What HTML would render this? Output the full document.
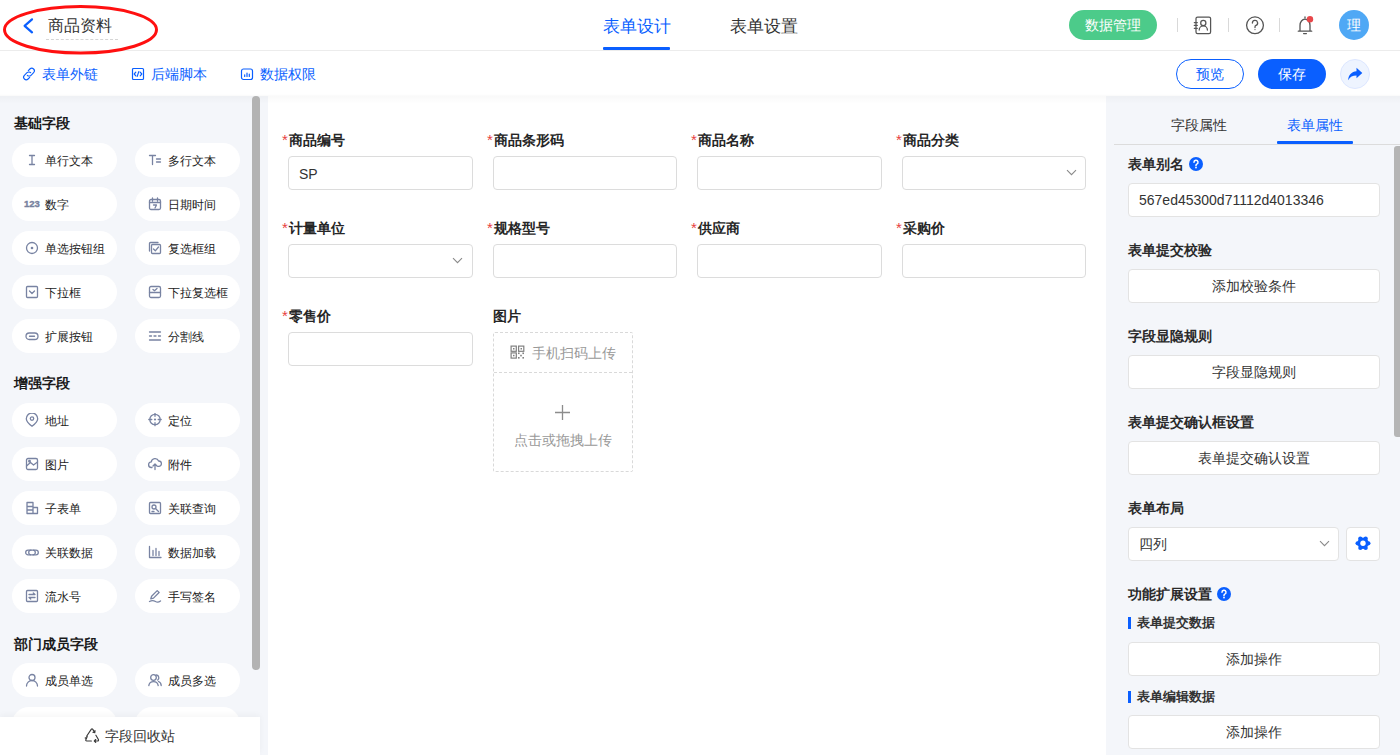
<!DOCTYPE html>
<html><head><meta charset="utf-8">
<style>
*{box-sizing:border-box;margin:0;padding:0}
html,body{width:1400px;height:755px;overflow:hidden;background:#fff;font-family:"Liberation Sans",sans-serif;color:#333}
.abs{position:absolute}
#hdr{position:absolute;left:0;top:0;width:1400px;height:51px;background:#fff;border-bottom:1px solid #ececec}
#bar{position:absolute;left:0;top:51px;width:1400px;height:45px;background:#fff}
#left{position:absolute;left:0;top:96px;width:268px;height:659px;background:#f4f6fa;overflow:hidden}
#canvas{position:absolute;left:268px;top:96px;width:838px;height:659px;background:#fff}
#right{position:absolute;left:1106px;top:96px;width:294px;height:659px;background:#f4f6fa;overflow:hidden}
#topshadow{position:absolute;left:0;top:94px;width:1400px;height:10px;background:linear-gradient(rgba(0,0,0,0),rgba(0,0,0,0.025) 20%,rgba(0,0,0,0));pointer-events:none}
.t{position:absolute;white-space:nowrap;line-height:1}
.blue{color:#0a5fff}
.sec{font-weight:bold;font-size:14px;color:#1a1a1a}
.pill{position:absolute;width:105px;height:34px;border-radius:17px;background:#fff;font-size:12px;color:#222}
.pill .ic{position:absolute;left:13px;top:10px;width:14px;height:14px}
.pill .tx{position:absolute;left:33px;top:11px;line-height:14px;white-space:nowrap}
.lbl{position:absolute;font-size:14px;font-weight:bold;color:#262626;line-height:1;white-space:nowrap}
.lbl i{font-style:normal;color:#e83e3e;font-weight:normal;font-size:15px;line-height:0;position:relative;top:0;margin-right:1px}
.inp{position:absolute;width:184px;height:34px;border:1px solid #dcdcdc;border-radius:4px;background:#fff}
.rbtn{position:absolute;left:1128px;width:252px;height:34px;border:1px solid #e3e3e3;border-radius:4px;background:#fff;font-size:14px;color:#333;text-align:center;line-height:32px}
.rl{position:absolute;left:1128px;font-size:14px;font-weight:bold;color:#2a2a2a;line-height:1;white-space:nowrap}
</style></head><body>
<div id="hdr"></div>
<div id="bar"></div>
<div id="left"></div>
<div id="canvas"></div>
<div id="right"></div>
<div id="topshadow"></div>

<!-- header -->
<svg class="abs" style="left:20px;top:15px" width="16" height="20" viewBox="0 0 16 20"><path d="M12 4.3 L4.6 10.8 L12 17.3" fill="none" stroke="#0a5fff" stroke-width="2.2" stroke-linecap="round" stroke-linejoin="round"/></svg>
<div class="t" style="left:48px;top:18px;font-size:16px;color:#333">商品资料</div>
<div class="abs" style="left:46px;top:39px;width:72px;border-top:1px dashed #d5d5d5"></div>
<svg class="abs" style="left:0;top:0" width="162" height="58"><ellipse cx="80.5" cy="29.8" rx="76" ry="23.2" fill="none" stroke="#ff1010" stroke-width="3"/></svg>

<div class="t blue" style="left:603px;top:18px;font-size:17px">表单设计</div>
<div class="abs" style="left:603px;top:47px;width:67px;height:3px;background:#0a5fff;border-radius:1px"></div>
<div class="t" style="left:730px;top:18px;font-size:17px;color:#333">表单设置</div>

<div class="abs" style="left:1069px;top:10px;width:88px;height:30px;border-radius:15px;background:#4ccb8a;color:#fff;font-size:14px;text-align:center;line-height:30px">数据管理</div>
<div class="abs" style="left:1177px;top:18px;width:1px;height:14px;background:#d9d9d9"></div>
<div class="abs" style="left:1228px;top:18px;width:1px;height:14px;background:#d9d9d9"></div>
<div class="abs" style="left:1279px;top:18px;width:1px;height:14px;background:#d9d9d9"></div>
<div class="abs" style="left:1339px;top:10px;width:30px;height:30px;border-radius:15px;background:#4fa8f5;color:#fff;font-size:14px;text-align:center;line-height:30px">理</div>


<svg class="abs" style="left:1192px;top:15px" width="22" height="21" viewBox="0 0 22 21" fill="none" stroke="#555" stroke-width="1.25" stroke-linecap="round"><rect x="4" y="2" width="14.6" height="16.6" rx="1.6"/><path d="M2.3 7.5h3M2.3 10.4h3M2.3 13.3h3"/><circle cx="11.3" cy="8" r="2.6"/><path d="M7.2 15a4.1 4.1 0 0 1 8.2 0"/></svg>
<svg class="abs" style="left:1244px;top:14px" width="22" height="22" viewBox="0 0 22 22" fill="none" stroke="#555" stroke-width="1.3" stroke-linecap="round"><circle cx="11" cy="11.3" r="8.4"/><path d="M8.4 9a2.6 2.6 0 1 1 3.6 2.4c-.7.3-1 .8-1 1.5v.7"/><circle cx="11" cy="15.6" r=".6" fill="#555" stroke="none"/></svg>
<svg class="abs" style="left:1295px;top:14px" width="22" height="22" viewBox="0 0 22 22" fill="none" stroke="#555" stroke-width="1.3" stroke-linecap="round" stroke-linejoin="round"><path d="M10 2.8v1.2M5 16.8V11.4a5 6.2 0 0 1 10 0V16.8M3.3 17.2h13.4M8.6 19.6h2.8"/><circle cx="15" cy="5.2" r="3.2" fill="#e8474a" stroke="none"/></svg>
<svg class="abs" style="left:21px;top:66px" width="16" height="16" viewBox="0 0 16 16" fill="none" stroke="#0a5fff" stroke-width="1.1" stroke-linecap="round"><path d="M7.3 4.6l1.6-1.6a2.6 2.6 0 0 1 3.7 3.7l-2.6 2.6a2.6 2.6 0 0 1-3.7 0"/><path d="M8.7 11.4l-1.6 1.6a2.6 2.6 0 0 1-3.7-3.7L6 6.7a2.6 2.6 0 0 1 3.7 0"/></svg>
<svg class="abs" style="left:131px;top:67px" width="14" height="14" viewBox="0 0 14 14" fill="none" stroke="#0a5fff" stroke-width="1.2" stroke-linecap="round" stroke-linejoin="round"><rect x="1.5" y="1.5" width="11" height="11" rx="1"/><path d="M4.8 5.2L3.2 7l1.6 1.8M9.2 5.2L10.8 7 9.2 8.8M7.8 4.6L6.2 9.4"/></svg>
<svg class="abs" style="left:240px;top:67px" width="14" height="14" viewBox="0 0 14 14" fill="none" stroke="#0a5fff" stroke-width="1.2" stroke-linecap="round"><rect x="1.5" y="2" width="11" height="10.5" rx="2"/><path d="M4.7 7.8v1.6M7 6.2v3.2M9.3 7.2v2.2"/></svg>
<!-- left -->
<div class="t sec" style="left:14px;top:116px">基础字段</div>
<div class="pill" style="left:12px;top:143px"><span class="tx">单行文本</span></div>
<svg class="abs" style="left:25px;top:153px" width="14" height="14" viewBox="0 0 14 14" fill="none" stroke="#7883a2" stroke-width="1.3" stroke-linecap="round" stroke-linejoin="round"><path d="M4.5 2.5h5M4.5 11.5h5M7 2.5v9"/></svg>
<div class="pill" style="left:135px;top:143px"><span class="tx">多行文本</span></div>
<svg class="abs" style="left:148px;top:153px" width="14" height="14" viewBox="0 0 14 14" fill="none" stroke="#7883a2" stroke-width="1.3" stroke-linecap="round" stroke-linejoin="round"><path d="M1.5 2.5h6M4.5 2.5v9M8.5 6h4M8.5 9h4"/></svg>
<div class="pill" style="left:12px;top:187px"><span class="tx">数字</span></div>
<div class="t" style="left:24px;top:199px;font-size:9.5px;font-weight:bold;color:#76819e;letter-spacing:0;-webkit-text-stroke:0.35px #76819e">123</div>
<div class="pill" style="left:135px;top:187px"><span class="tx">日期时间</span></div>
<svg class="abs" style="left:148px;top:197px" width="14" height="14" viewBox="0 0 14 14" fill="none" stroke="#7883a2" stroke-width="1.3" stroke-linecap="round" stroke-linejoin="round"><rect x="1.5" y="2.5" width="11" height="10" rx="1.5"/><path d="M4.5 1v3M9.5 1v3M1.5 5.5h11M5.5 8h3l-1.5 3"/></svg>
<div class="pill" style="left:12px;top:231px"><span class="tx">单选按钮组</span></div>
<svg class="abs" style="left:25px;top:241px" width="14" height="14" viewBox="0 0 14 14" fill="none" stroke="#7883a2" stroke-width="1.3" stroke-linecap="round" stroke-linejoin="round"><circle cx="7" cy="7" r="5.5"/><circle cx="7" cy="7" r="1.3" fill="#7883a2" stroke="none"/></svg>
<div class="pill" style="left:135px;top:231px"><span class="tx">复选框组</span></div>
<svg class="abs" style="left:148px;top:241px" width="14" height="14" viewBox="0 0 14 14" fill="none" stroke="#7883a2" stroke-width="1.3" stroke-linecap="round" stroke-linejoin="round"><path d="M1.5 10V2.5a1 1 0 0 1 1-1H10"/><rect x="3.5" y="3.5" width="9" height="9" rx="1"/><path d="M5.5 8l1.8 1.8L10.5 6"/></svg>
<div class="pill" style="left:12px;top:275px"><span class="tx">下拉框</span></div>
<svg class="abs" style="left:25px;top:285px" width="14" height="14" viewBox="0 0 14 14" fill="none" stroke="#7883a2" stroke-width="1.3" stroke-linecap="round" stroke-linejoin="round"><rect x="1.5" y="1.5" width="11" height="11" rx="1"/><path d="M4.5 6l2.5 2.5L9.5 6"/></svg>
<div class="pill" style="left:135px;top:275px"><span class="tx">下拉复选框</span></div>
<svg class="abs" style="left:148px;top:285px" width="14" height="14" viewBox="0 0 14 14" fill="none" stroke="#7883a2" stroke-width="1.3" stroke-linecap="round" stroke-linejoin="round"><rect x="1.5" y="1.5" width="11" height="11" rx="1.5"/><path d="M1.5 7.5h11M5 4.5l1.5 1.2L9 3.5"/></svg>
<div class="pill" style="left:12px;top:319px"><span class="tx">扩展按钮</span></div>
<svg class="abs" style="left:25px;top:329px" width="14" height="14" viewBox="0 0 14 14" fill="none" stroke="#7883a2" stroke-width="1.3" stroke-linecap="round" stroke-linejoin="round"><rect x="1" y="4" width="12" height="6.5" rx="3.25"/><path d="M4.5 7.25h5"/></svg>
<div class="pill" style="left:135px;top:319px"><span class="tx">分割线</span></div>
<svg class="abs" style="left:148px;top:329px" width="14" height="14" viewBox="0 0 14 14" fill="none" stroke="#7883a2" stroke-width="1.3" stroke-linecap="round" stroke-linejoin="round"><path d="M1.5 3h11M1.5 11h11M1.5 7h2M6 7h2M10.5 7h2"/></svg>
<div class="t sec" style="left:14px;top:376px">增强字段</div>
<div class="pill" style="left:12px;top:403px"><span class="tx">地址</span></div>
<svg class="abs" style="left:25px;top:413px" width="14" height="14" viewBox="0 0 14 14" fill="none" stroke="#7883a2" stroke-width="1.3" stroke-linecap="round" stroke-linejoin="round"><path d="M7 13.2S1.3 9 1.3 5.7a5.7 5.7 0 0 1 11.4 0C12.7 9 7 13.2 7 13.2z"/><circle cx="7" cy="5.6" r="1.7"/></svg>
<div class="pill" style="left:135px;top:403px"><span class="tx">定位</span></div>
<svg class="abs" style="left:148px;top:413px" width="14" height="14" viewBox="0 0 14 14" fill="none" stroke="#7883a2" stroke-width="1.3" stroke-linecap="round" stroke-linejoin="round"><circle cx="7" cy="6.5" r="5.2"/><circle cx="7" cy="6.5" r="1.1" fill="#7883a2" stroke="none"/><path d="M7 .3v3M7 9.7v3M.8 6.5h3M10.2 6.5h3"/></svg>
<div class="pill" style="left:12px;top:447px"><span class="tx">图片</span></div>
<svg class="abs" style="left:25px;top:457px" width="14" height="14" viewBox="0 0 14 14" fill="none" stroke="#7883a2" stroke-width="1.3" stroke-linecap="round" stroke-linejoin="round"><rect x="1.5" y="1.5" width="11" height="11" rx="1.5"/><path d="M1.5 9l4-3.5 3 2.5 4-3"/><circle cx="4.5" cy="4.3" r="0.8"/></svg>
<div class="pill" style="left:135px;top:447px"><span class="tx">附件</span></div>
<svg class="abs" style="left:148px;top:457px" width="14" height="14" viewBox="0 0 14 14" fill="none" stroke="#7883a2" stroke-width="1.3" stroke-linecap="round" stroke-linejoin="round"><path d="M4 10.5H3.5a2.8 2.8 0 0 1-.2-5.6A3.8 3.8 0 0 1 10.6 4a2.7 2.7 0 0 1 .2 5.4H10M7 12.5V7M5 9l2-2 2 2"/></svg>
<div class="pill" style="left:12px;top:491px"><span class="tx">子表单</span></div>
<svg class="abs" style="left:25px;top:501px" width="14" height="14" viewBox="0 0 14 14" fill="none" stroke="#7883a2" stroke-width="1.3" stroke-linecap="round" stroke-linejoin="round"><path d="M2 1.5h6v11H2zM8 6.5h4.5v6H8M2 5.5h6M2 9h6"/></svg>
<div class="pill" style="left:135px;top:491px"><span class="tx">关联查询</span></div>
<svg class="abs" style="left:148px;top:501px" width="14" height="14" viewBox="0 0 14 14" fill="none" stroke="#7883a2" stroke-width="1.3" stroke-linecap="round" stroke-linejoin="round"><rect x="1.5" y="1.5" width="11" height="11" rx="1"/><circle cx="6" cy="6" r="2"/><path d="M7.5 7.5l3 3M4 10.5h2"/></svg>
<div class="pill" style="left:12px;top:535px"><span class="tx">关联数据</span></div>
<svg class="abs" style="left:25px;top:545px" width="14" height="14" viewBox="0 0 14 14" fill="none" stroke="#7883a2" stroke-width="1.3" stroke-linecap="round" stroke-linejoin="round"><path d="M5.5 9.8H3a2.3 2.3 0 0 1 0-4.6h5a2.3 2.3 0 0 1 0 4.6"/><path d="M8.5 5.2H11a2.3 2.3 0 0 1 0 4.6H6a2.3 2.3 0 0 1 0-4.6"/></svg>
<div class="pill" style="left:135px;top:535px"><span class="tx">数据加载</span></div>
<svg class="abs" style="left:148px;top:545px" width="14" height="14" viewBox="0 0 14 14" fill="none" stroke="#7883a2" stroke-width="1.3" stroke-linecap="round" stroke-linejoin="round"><path d="M1.5 1.5v11h11.5M5 5.5v5M8 3.5v7M11 6.5v4"/></svg>
<div class="pill" style="left:12px;top:579px"><span class="tx">流水号</span></div>
<svg class="abs" style="left:25px;top:589px" width="14" height="14" viewBox="0 0 14 14" fill="none" stroke="#7883a2" stroke-width="1.3" stroke-linecap="round" stroke-linejoin="round"><rect x="1.5" y="1.5" width="11" height="11" rx="1"/><path d="M4 5.5h6L8.3 4M10 8.5H4l1.7 1.5"/></svg>
<div class="pill" style="left:135px;top:579px"><span class="tx">手写签名</span></div>
<svg class="abs" style="left:148px;top:589px" width="14" height="14" viewBox="0 0 14 14" fill="none" stroke="#7883a2" stroke-width="1.3" stroke-linecap="round" stroke-linejoin="round"><path d="M1.5 12.5c2-1.2 4-1.2 6 0s3.5.6 5-.5M2.8 9.8l.8-2.6 5.6-5.6 1.9 1.9-5.6 5.6z"/></svg>
<div class="t sec" style="left:14px;top:637px">部门成员字段</div>
<div class="pill" style="left:12px;top:663px"><span class="tx">成员单选</span></div>
<svg class="abs" style="left:25px;top:673px" width="14" height="14" viewBox="0 0 14 14" fill="none" stroke="#7883a2" stroke-width="1.3" stroke-linecap="round" stroke-linejoin="round"><circle cx="7" cy="4.5" r="3"/><path d="M1.5 13a5.5 5.5 0 0 1 11 0"/></svg>
<div class="pill" style="left:135px;top:663px"><span class="tx">成员多选</span></div>
<svg class="abs" style="left:148px;top:673px" width="14" height="14" viewBox="0 0 14 14" fill="none" stroke="#7883a2" stroke-width="1.3" stroke-linecap="round" stroke-linejoin="round"><circle cx="5.5" cy="4.5" r="2.8"/><path d="M.8 12.5a4.8 4.8 0 0 1 9.4 0M8.5 2a2.8 2.8 0 0 1 1.2 5M10.5 8.5a4.5 4.5 0 0 1 2.7 4"/></svg>
<div class="pill" style="left:12px;top:707px"><span class="tx">部门单选</span></div>
<div class="pill" style="left:135px;top:707px"><span class="tx">部门多选</span></div>
<div class="abs" style="left:252px;top:96px;width:8px;height:574px;border-radius:4px;background:#b3b3b3"></div>
<div class="abs" style="left:0;top:717px;width:260px;height:38px;background:#fff;box-shadow:0 -2px 6px rgba(0,0,0,0.04)"></div>
<svg class="abs" style="left:84px;top:728px" width="16" height="15" viewBox="0 0 16 15" fill="none" stroke="#3a3a3a" stroke-width="1.15" stroke-linecap="round" stroke-linejoin="round"><path d="M2.6 8.2L7.2 1.4Q8 .4 8.8 1.4L10.7 4.5M11 2.6l-.2 2-1.9-.3"/><path d="M11.9 7.2l2.5 4.3Q14.9 12.9 13.4 13H10.3M11.7 11.5l-1.4 1.5 1.4 1.4"/><path d="M7.4 13H2.8Q1.3 12.9 1.9 11.5L2.5 10.4M1.2 9.9l1.3.5.7-1.8"/></svg>
<div class="t" style="left:105px;top:729px;font-size:14px;color:#333">字段回收站</div>
<!-- toolbar -->
<div class="t blue" style="left:42px;top:67px;font-size:14px">表单外链</div>
<div class="t blue" style="left:151px;top:67px;font-size:14px">后端脚本</div>
<div class="t blue" style="left:260px;top:67px;font-size:14px">数据权限</div>
<div class="abs" style="left:1176px;top:59px;width:68px;height:30px;border:1px solid #0a5fff;border-radius:15px;color:#0a5fff;font-size:14px;text-align:center;line-height:28px">预览</div>
<div class="abs" style="left:1258px;top:59px;width:68px;height:30px;border-radius:15px;background:#0a5fff;color:#fff;font-size:14px;text-align:center;line-height:30px">保存</div>
<div class="abs" style="left:1340px;top:59px;width:30px;height:30px;border:1px solid #dde7ff;border-radius:15px;background:#eef4ff"></div>

<!-- canvas -->
<div class="lbl" style="left:282px;top:133px"><i>*</i>商品编号</div>
<div class="inp" style="left:288px;top:156px;width:185px"></div>
<div class="t" style="left:299px;top:167px;font-size:14px;color:#333">SP</div>
<div class="lbl" style="left:487px;top:133px"><i>*</i>商品条形码</div>
<div class="inp" style="left:493px;top:156px;width:184px"></div>
<div class="lbl" style="left:691px;top:133px"><i>*</i>商品名称</div>
<div class="inp" style="left:697px;top:156px;width:185px"></div>
<div class="lbl" style="left:896px;top:133px"><i>*</i>商品分类</div>
<div class="inp" style="left:902px;top:156px;width:184px"></div>
<svg class="abs" style="left:1066px;top:169px" width="12" height="8" viewBox="0 0 12 8"><path d="M1 1.2L5.5 5.7 10 1.2" fill="none" stroke="#8a8a8a" stroke-width="1.1"/></svg>
<div class="lbl" style="left:282px;top:221px"><i>*</i>计量单位</div>
<div class="inp" style="left:288px;top:244px;width:185px"></div>
<svg class="abs" style="left:452px;top:257px" width="12" height="8" viewBox="0 0 12 8"><path d="M1 1.2L5.5 5.7 10 1.2" fill="none" stroke="#8a8a8a" stroke-width="1.1"/></svg>
<div class="lbl" style="left:487px;top:221px"><i>*</i>规格型号</div>
<div class="inp" style="left:493px;top:244px;width:184px"></div>
<div class="lbl" style="left:691px;top:221px"><i>*</i>供应商</div>
<div class="inp" style="left:697px;top:244px;width:185px"></div>
<div class="lbl" style="left:896px;top:221px"><i>*</i>采购价</div>
<div class="inp" style="left:902px;top:244px;width:184px"></div>
<div class="lbl" style="left:282px;top:309px"><i>*</i>零售价</div>
<div class="inp" style="left:288px;top:332px;width:185px"></div>
<div class="lbl" style="left:493px;top:309px">图片</div>
<div class="abs" style="left:493px;top:332px;width:140px;height:140px;border:1px dashed #d9d9d9;border-radius:2px"></div>
<div class="abs" style="left:494px;top:372px;width:138px;border-top:1px dashed #d9d9d9"></div>
<svg class="abs" style="left:510px;top:345px" width="15" height="14" viewBox="0 0 15 14"><g fill="none" stroke="#808080" stroke-width="1.2"><rect x="1.1" y="1.1" width="5.2" height="5.2"/><rect x="8.6" y="1.1" width="5.2" height="5.2"/><rect x="1.1" y="7.9" width="5.2" height="5.2"/></g><g fill="#808080"><rect x="3" y="3" width="1.5" height="1.5"/><rect x="10.5" y="3" width="1.5" height="1.5"/><rect x="3" y="9.8" width="1.5" height="1.5"/><rect x="8" y="7.5" width="1.6" height="1.6"/><rect x="12.4" y="7.5" width="1.6" height="1.6"/><rect x="10.2" y="9.8" width="1.6" height="1.6"/><rect x="8" y="12" width="1.6" height="1.6"/><rect x="12.4" y="12" width="1.6" height="1.6"/></g></svg>
<div class="t" style="left:532px;top:346px;font-size:14px;color:#999">手机扫码上传</div>
<svg class="abs" style="left:554px;top:404px" width="17" height="17" viewBox="0 0 17 17"><path d="M8.5 1v15M1 8.5h15" stroke="#8c8c8c" stroke-width="1.3"/></svg>
<div class="t" style="left:514px;top:433px;font-size:14px;color:#999">点击或拖拽上传</div>
<!-- right -->
<div class="t" style="left:1171px;top:118px;font-size:14px;color:#333">字段属性</div>
<div class="t blue" style="left:1287px;top:118px;font-size:14px">表单属性</div>
<div class="abs" style="left:1114px;top:144px;width:286px;height:1px;background:#dcdcdc"></div>
<div class="abs" style="left:1277px;top:141px;width:76px;height:3px;background:#0a5fff;border-radius:1px"></div>
<div class="abs" style="left:1394px;top:146px;width:6px;height:291px;border-radius:3px 0 0 3px;background:#b5b5b5"></div>
<div class="rl" style="top:157px">表单别名</div>
<svg class="abs" style="left:1189px;top:157px" width="14" height="14" viewBox="0 0 14 14"><circle cx="7" cy="7" r="7" fill="#0a5fff"/><path d="M5 5.3a2 2 0 1 1 2.8 1.8c-.6.3-.8.6-.8 1.2v.5" fill="none" stroke="#fff" stroke-width="1.5" stroke-linecap="round"/><circle cx="7" cy="10.6" r=".9" fill="#fff"/></svg>
<div class="rbtn" style="top:183px;text-align:left;padding-left:10px;line-height:33px">567ed45300d71112d4013346</div>
<div class="rl" style="top:243px">表单提交校验</div>
<div class="rbtn" style="top:269px">添加校验条件</div>
<div class="rl" style="top:329px">字段显隐规则</div>
<div class="rbtn" style="top:355px">字段显隐规则</div>
<div class="rl" style="top:415px">表单提交确认框设置</div>
<div class="rbtn" style="top:441px">表单提交确认设置</div>
<div class="rl" style="top:501px">表单布局</div>
<div class="rbtn" style="top:527px;width:211px;text-align:left;padding-left:10px;line-height:33px">四列</div>
<svg class="abs" style="left:1319px;top:540px" width="12" height="8" viewBox="0 0 12 8"><path d="M1 1.2L5.5 5.7 10 1.2" fill="none" stroke="#8a8a8a" stroke-width="1.1"/></svg>
<div class="rbtn" style="left:1346px;top:527px;width:34px"></div>
<svg class="abs" style="left:1355px;top:535px" width="16" height="17" viewBox="0 0 16 17"><g fill="#0a5fff"><circle cx="8" cy="8.3" r="5.7"/><circle cx="13.40" cy="8.30" r="2.1"/><circle cx="10.70" cy="12.98" r="2.1"/><circle cx="5.30" cy="12.98" r="2.1"/><circle cx="2.60" cy="8.30" r="2.1"/><circle cx="5.30" cy="3.62" r="2.1"/><circle cx="10.70" cy="3.62" r="2.1"/></g><circle cx="8" cy="8.3" r="2.7" fill="#fff"/></svg>
<div class="rl" style="top:587px">功能扩展设置</div>
<svg class="abs" style="left:1217px;top:587px" width="14" height="14" viewBox="0 0 14 14"><circle cx="7" cy="7" r="7" fill="#0a5fff"/><path d="M5 5.3a2 2 0 1 1 2.8 1.8c-.6.3-.8.6-.8 1.2v.5" fill="none" stroke="#fff" stroke-width="1.5" stroke-linecap="round"/><circle cx="7" cy="10.6" r=".9" fill="#fff"/></svg>
<div class="abs" style="left:1128px;top:617px;width:3px;height:12px;background:#0a5fff"></div>
<div class="t" style="left:1137px;top:616px;font-size:13px;font-weight:bold;color:#333">表单提交数据</div>
<div class="rbtn" style="top:642px">添加操作</div>
<div class="abs" style="left:1128px;top:691px;width:3px;height:12px;background:#0a5fff"></div>
<div class="t" style="left:1137px;top:690px;font-size:13px;font-weight:bold;color:#333">表单编辑数据</div>
<div class="rbtn" style="top:715px">添加操作</div>
<svg class="abs" style="left:1346px;top:66px" width="18" height="16" viewBox="0 0 18 16"><path fill="#0a5fff" d="M10.5 1.8L16.3 7l-5.8 5.2V9.4C6.6 9.4 4 10.8 2.2 14.2 2.2 9 5.6 5.6 10.5 5.2z"/></svg>
</body></html>
